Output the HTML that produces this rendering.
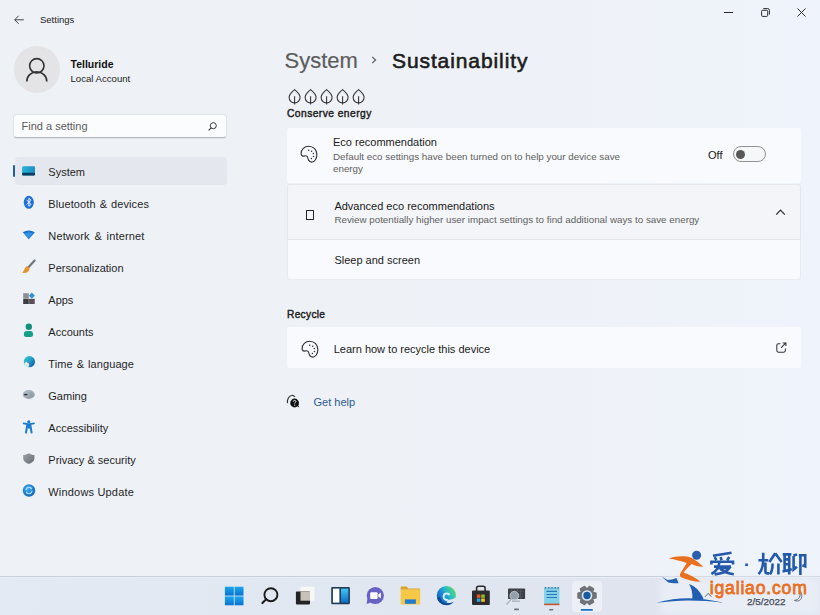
<!DOCTYPE html>
<html><head><meta charset="utf-8">
<style>
*{margin:0;padding:0;box-sizing:border-box}
html,body{width:820px;height:615px;overflow:hidden}
body{position:relative;background:linear-gradient(90deg,#eef2f7 0px,#eef1f6 290px,#eef2f8 550px,#eff3fb 820px);font-family:"Liberation Sans",sans-serif;color:#1b1b1b}
.a{position:absolute;white-space:nowrap;line-height:1}
svg.a{overflow:visible}
.nav{font-size:11px;color:#1f1f1f;transform:translateY(0.5px)}
.card{position:absolute;left:287px;width:514px;background:#f9fafd;border-radius:3px}
.sub{font-size:9.8px;color:#5f5f5f}
.t11{font-size:11px;color:#1a1a1a}
</style></head><body>

<!-- title bar -->
<svg class="a" style="left:14px;top:14.8px" width="10" height="10" viewBox="0 0 10 10"><path d="M4.6 0.8 0.7 4.8 4.6 8.8M0.8 4.8H9.8" fill="none" stroke="#3a3a3a" stroke-width="0.95"/></svg>
<div class="a" style="left:40px;top:14.9px;font-size:9.5px;color:#222">Settings</div>
<!-- window controls -->
<div class="a" style="left:723.5px;top:11.7px;width:9px;height:1px;background:#2a2a2a"></div>
<svg class="a" style="left:760.5px;top:8.3px" width="9" height="9" viewBox="0 0 9 9"><rect x="0.6" y="2.3" width="6.1" height="6.1" rx="1" fill="none" stroke="#2a2a2a" stroke-width="1"/><path d="M2.3 0.6H6.7A1.7 1.7 0 0 1 8.4 2.3V6.6" fill="none" stroke="#2a2a2a" stroke-width="1"/></svg>
<svg class="a" style="left:797px;top:8.2px" width="9" height="9" viewBox="0 0 9 9"><path d="M0.5 0.5 8.5 8.5M8.5 0.5 0.5 8.5" stroke="#2a2a2a" stroke-width="1"/></svg>

<!-- account -->
<div class="a" style="left:13.5px;top:46px;width:46.5px;height:46.5px;border-radius:50%;background:#e4e4e6"></div>
<svg class="a" style="left:25px;top:57px" width="24" height="26" viewBox="0 0 24 26"><circle cx="11.8" cy="8.8" r="7.2" fill="none" stroke="#333" stroke-width="1.6"/><path d="M1.8 24.5c0-5.6 4.4-9.6 10-9.6s10 4 10 9.6" fill="none" stroke="#333" stroke-width="1.6"/></svg>
<div class="a" style="left:70.5px;top:59px;font-size:10.5px;font-weight:bold;color:#111">Telluride</div>
<div class="a" style="left:70.5px;top:73.7px;font-size:9.6px;color:#222">Local Account</div>

<!-- search -->
<div class="a" style="left:13px;top:113.5px;width:214px;height:24px;background:#fbfcfe;border:1px solid #e0e3e8;border-bottom:1px solid #b4b9c0;border-radius:4px;box-shadow:0 0.5px 1px rgba(0,0,0,0.06)"></div>
<div class="a" style="left:21.5px;top:120.6px;font-size:11px;color:#5a5a5a">Find a setting</div>
<svg class="a" style="left:207.5px;top:121.5px" width="9" height="9" viewBox="0 0 9 9"><circle cx="5.3" cy="3.7" r="3" fill="none" stroke="#3a3a3a" stroke-width="1"/><path d="M3.2 5.8 0.6 8.4" stroke="#3a3a3a" stroke-width="1.1"/></svg>

<!-- nav selection -->
<div class="a" style="left:14.5px;top:157px;width:212.5px;height:28px;background:#e4e7ed;border-radius:4px"></div>
<div class="a" style="left:12.7px;top:164.5px;width:2.6px;height:12px;background:#1a5fa8;border-radius:2px"></div>

<!-- nav icons -->
<svg class="a" style="left:0;top:0" width="50" height="520">
 <defs>
  <linearGradient id="gsys" x1="0" y1="0" x2="1" y2="0"><stop offset="0" stop-color="#27b7d9"/><stop offset="1" stop-color="#1f8ac0"/></linearGradient>
  <radialGradient id="gupd" cx="0.4" cy="0.35" r="0.7"><stop offset="0" stop-color="#3fb0f2"/><stop offset="1" stop-color="#0d62b8"/></radialGradient>
  <linearGradient id="gglobe" x1="0" y1="0" x2="1" y2="0.6"><stop offset="0" stop-color="#36c7c4"/><stop offset="0.55" stop-color="#23a6d0"/><stop offset="1" stop-color="#1663ad"/></linearGradient>
  <linearGradient id="ggame" x1="0" y1="0" x2="1" y2="1"><stop offset="0" stop-color="#b3c0c9"/><stop offset="1" stop-color="#8c96a0"/></linearGradient>
  <linearGradient id="gshield" x1="0" y1="0" x2="1" y2="1"><stop offset="0" stop-color="#9ea3a8"/><stop offset="1" stop-color="#676c72"/></linearGradient>
 </defs>
 <!-- system -->
 <rect x="22" y="166.2" width="13" height="9.2" rx="1.3" fill="url(#gsys)"/>
 <rect x="22" y="172.8" width="13" height="2.6" rx="1" fill="#0b3d5e"/>
 <!-- bluetooth -->
 <ellipse cx="28.8" cy="202.3" rx="5" ry="6.5" fill="#1f6fd8"/>
 <path d="M26.6 199.8 31 204.4 28.9 206.3V198.2L31 200.2 26.6 204.7" fill="none" stroke="#fff" stroke-width="0.9"/>
 <!-- network -->
 <path d="M22.7 232.3Q28.8 228.8 34.9 232.3L28.8 239.3Z" fill="#1b73cf"/>
 <path d="M24.6 233.5Q28.8 231.5 33 233.5L28.8 238.2Z" fill="#2f93e6"/>
 <!-- personalization -->
 <path d="M34.6 260.5 28.5 267.3" stroke="#6d7883" stroke-width="2.2" stroke-linecap="round"/>
 <path d="M27.3 266.1C25.3 266.9 24.6 268.8 23.9 270.2 23.4 271.3 22.6 272 22.4 273 24.5 273.3 27.2 272.6 28.7 270.9 29.6 269.9 29.6 268.5 29.3 267.9Z" fill="#e69536"/>
 <!-- apps -->
 <rect x="23.2" y="293.2" width="5.6" height="5.3" fill="#8c8f93"/>
 <rect x="23.2" y="298.8" width="5.6" height="5.2" fill="#3b3e42"/>
 <rect x="29.1" y="298.8" width="5.6" height="5.2" fill="#5c4f59"/>
 <path d="M31.8 292.6 34.9 295.8 31.8 298.6 28.9 295.8Z" fill="#2a8fd8"/>
 <!-- accounts -->
 <circle cx="28.8" cy="326.7" r="3.2" fill="#13907c"/>
 <path d="M23.9 334C23.9 332.2 25 331.1 26.6 331.1H30.4C32 331.1 33 332.2 33 334V335C33 336.2 32 336.9 30.6 336.9H26.3C24.8 336.9 23.9 336.2 23.9 335Z" fill="#17a087"/>
 <!-- time & language -->
 <circle cx="29.4" cy="361.7" r="5.6" fill="url(#gglobe)"/>
 <path d="M24.2 363.4C24.6 365.6 26.3 367.1 28.3 367.3L29.6 363.6 26.6 361.4Z" fill="#d6eef2"/>
 <path d="M26.8 361.3 28.8 363.4 30.6 364" fill="none" stroke="#6a5670" stroke-width="0.9"/>
 <!-- gaming -->
 <ellipse cx="28.7" cy="394.5" rx="6.1" ry="4.4" fill="url(#ggame)"/>
 <path d="M24.1 394.6H27.4" stroke="#2a2f35" stroke-width="1.3"/>
 <path d="M31 392.5V397" stroke="#8a949d" stroke-width="0.8"/>
 <!-- accessibility -->
 <circle cx="28.8" cy="421.8" r="1.6" fill="#1c7bd1"/>
 <path d="M23.6 423.4 28.8 424.4 34 423.4" fill="none" stroke="#1c7bd1" stroke-width="1.7" stroke-linecap="round"/>
 <path d="M27.4 424.2 26 432.6M30.2 424.2 31.6 432.6" stroke="#1c7bd1" stroke-width="2" stroke-linecap="round"/>
 <rect x="27.3" y="424" width="3" height="4.5" fill="#1c7bd1"/>
 <!-- privacy -->
 <path d="M28.8 453.2C26.8 454.4 25 454.9 23.2 455V458.5C23.2 461.1 25.4 463 28.8 464 32.2 463 34.4 461.1 34.4 458.5V455C32.6 454.9 30.8 454.4 28.8 453.2Z" fill="url(#gshield)"/>
 <!-- windows update -->
 <circle cx="29" cy="490.5" r="6.2" fill="url(#gupd)"/>
 <path d="M25.9 490.2A3.1 3.1 0 0 1 31.6 488.7M32.1 490.8A3.1 3.1 0 0 1 26.4 492.3" fill="none" stroke="#b9e3ff" stroke-width="1.1"/>
 <path d="M31.9 487.2 31.9 489.3 29.9 489.1Z M26.1 493.8 26.1 491.7 28.1 491.9Z" fill="#b9e3ff"/>
</svg>

<div class="a nav" style="left:48.3px;top:166.3px">System</div>
<div class="a nav" style="left:48.3px;top:198.3px;word-spacing:0.8px;letter-spacing:0.1px">Bluetooth &amp; devices</div>
<div class="a nav" style="left:48.3px;top:230.3px;word-spacing:1.5px;letter-spacing:0.15px">Network &amp; internet</div>
<div class="a nav" style="left:48.3px;top:262.3px">Personalization</div>
<div class="a nav" style="left:48.3px;top:294.3px">Apps</div>
<div class="a nav" style="left:48.3px;top:326.3px">Accounts</div>
<div class="a nav" style="left:48.3px;top:358.3px;word-spacing:0.75px;letter-spacing:0.1px">Time &amp; language</div>
<div class="a nav" style="left:48.3px;top:390.3px">Gaming</div>
<div class="a nav" style="left:48.3px;top:422.3px">Accessibility</div>
<div class="a nav" style="left:48.3px;top:454.3px">Privacy &amp; security</div>
<div class="a nav" style="left:48.3px;top:486.3px;letter-spacing:0.18px">Windows Update</div>

<!-- header -->
<div class="a" style="left:284.5px;top:50.1px;font-size:22px;color:#5d5d5d;-webkit-text-stroke:0.2px #5d5d5d">System</div>
<svg class="a" style="left:371px;top:56px" width="6" height="8" viewBox="0 0 6 8"><path d="M1.2 0.8 4.6 4 1.2 7.2" fill="none" stroke="#555" stroke-width="1.1"/></svg>
<div class="a" style="left:392px;top:50.1px;font-size:21px;color:#1c1c1c;letter-spacing:0.9px;-webkit-text-stroke:0.6px #1c1c1c">Sustainability</div>

<!-- leaves -->
<svg class="a" style="left:0;top:0" width="400" height="120">
 <g fill="none" stroke="#2e2e2e" stroke-width="1.05">
  <g id="leaf"><path d="M294.6 89.5C293 91.1 289.1 93.6 289.1 97.3 289.1 100.5 291.6 103 294.6 103 297.6 103 300.1 100.5 300.1 97.3 300.1 93.6 296.2 91.1 294.6 89.5Z"/><path d="M294.6 96.2V104.5"/></g>
  <use href="#leaf" x="16"/><use href="#leaf" x="32"/><use href="#leaf" x="48"/><use href="#leaf" x="64"/>
 </g>
</svg>
<div class="a" style="left:287px;top:108.6px;font-size:10.3px;color:#1a1a1a;letter-spacing:0.42px;-webkit-text-stroke:0.4px #1a1a1a">Conserve energy</div>

<!-- card1 -->
<div class="card" style="top:127.5px;height:55px"></div>
<svg class="a" style="left:296px;top:140px" width="26" height="26" viewBox="0 0 26 26"><g fill="none" stroke="#2e2e2e" stroke-width="1.1"><path d="M12.7 6.3C17.4 6.3 20.9 9.9 20.9 14.6 20.9 19 18.3 22.1 15.6 22.1 13.6 22.1 12.4 20.6 11.9 18.2 11.6 16.5 10.9 15.7 9.6 15.8L7.3 16.1C5.9 16.2 5.1 15.1 5.1 13.6 5.1 9.5 8.5 6.3 12.7 6.3Z"/></g><g fill="#2e2e2e"><circle cx="12.7" cy="10.2" r="0.75"/><circle cx="15.6" cy="11.2" r="0.75"/><circle cx="17.3" cy="13.5" r="0.75"/><circle cx="17.5" cy="16.5" r="0.75"/><circle cx="15.4" cy="18.4" r="0.75"/></g></svg>
<div class="a t11" style="left:333px;top:136.6px">Eco recommendation</div>
<div class="a sub" style="left:333px;top:151.8px">Default eco settings have been turned on to help your device save</div>
<div class="a sub" style="left:333px;top:163.9px">energy</div>
<div class="a t11" style="left:708px;top:149.9px">Off</div>
<div class="a" style="left:733.4px;top:146.2px;width:32.3px;height:16.2px;border:1px solid #939393;border-radius:8.1px;background:#f6f7f9"></div>
<div class="a" style="left:735.9px;top:149.8px;width:9.6px;height:9.6px;border-radius:50%;background:#585858"></div>

<!-- card2 -->
<div class="card" style="top:184px;height:56px;background:#f3f5f9;border:1px solid #e4e7eb;border-bottom:none;border-radius:3px 3px 0 0"></div>
<div class="a" style="left:287px;top:239px;width:514px;height:1px;background:#e2e5e9"></div>
<div class="a" style="left:306px;top:209.6px;width:8.3px;height:10.4px;border:1.5px solid #222;border-radius:0.6px"></div>
<div class="a t11" style="left:334.4px;top:200.7px">Advanced eco recommendations</div>
<div class="a sub" style="left:334.4px;top:214.9px">Review potentially higher user impact settings to find additional ways to save energy</div>
<svg class="a" style="left:775px;top:208px" width="11" height="8" viewBox="0 0 11 8"><path d="M1.2 6.6 5.5 2.2 9.8 6.6" fill="none" stroke="#2a2a2a" stroke-width="1.2"/></svg>
<div class="card" style="top:240px;height:39.5px;border:1px solid #e8eaee;border-top:none;border-radius:0 0 3px 3px"></div>
<div class="a t11" style="left:334.4px;top:255.2px">Sleep and screen</div>

<!-- recycle -->
<div class="a" style="left:287px;top:309.7px;font-size:10.2px;color:#1a1a1a;letter-spacing:0.3px;-webkit-text-stroke:0.4px #1a1a1a">Recycle</div>
<div class="card" style="top:327px;height:41px"></div>
<svg class="a" style="left:296.5px;top:334.5px" width="26" height="26" viewBox="0 0 26 26"><g fill="none" stroke="#2e2e2e" stroke-width="1.1"><path d="M12.7 6.3C17.4 6.3 20.9 9.9 20.9 14.6 20.9 19 18.3 22.1 15.6 22.1 13.6 22.1 12.4 20.6 11.9 18.2 11.6 16.5 10.9 15.7 9.6 15.8L7.3 16.1C5.9 16.2 5.1 15.1 5.1 13.6 5.1 9.5 8.5 6.3 12.7 6.3Z"/></g><g fill="#2e2e2e"><circle cx="12.7" cy="10.2" r="0.75"/><circle cx="15.6" cy="11.2" r="0.75"/><circle cx="17.3" cy="13.5" r="0.75"/><circle cx="17.5" cy="16.5" r="0.75"/><circle cx="15.4" cy="18.4" r="0.75"/></g></svg>
<div class="a t11" style="left:333.7px;top:343.6px">Learn how to recycle this device</div>
<svg class="a" style="left:770px;top:336px" width="24" height="24" viewBox="0 0 24 24"><path d="M10.4 7.7H8.4C7.3 7.7 6.8 8.2 6.8 9.3V14.6C6.8 15.7 7.3 16.2 8.4 16.2H13.8C14.9 16.2 15.4 15.7 15.4 14.6V12.6" fill="none" stroke="#333" stroke-width="1.05"/><path d="M11 11.9 15.6 7.1M12.7 6.9H15.9V10.1" fill="none" stroke="#333" stroke-width="1.05"/></svg>

<!-- get help -->
<svg class="a" style="left:282px;top:390px" width="24" height="24" viewBox="0 0 24 24"><path d="M5.6 13.2C4.9 9.8 6.6 5.8 9.6 5.5 11 5.3 12.2 6 12.9 7" fill="none" stroke="#333" stroke-width="1.2"/><circle cx="12.6" cy="13" r="4.4" fill="#111"/><path d="M15 16 17.2 17.6 16.2 15Z" fill="#111"/><path d="M11.3 11.6C11.3 10.8 11.9 10.4 12.6 10.4 13.3 10.4 13.9 10.8 13.9 11.5 13.9 12.3 12.7 12.4 12.7 13.5" fill="none" stroke="#fff" stroke-width="0.9"/><circle cx="12.7" cy="15.1" r="0.6" fill="#fff"/></svg>
<div class="a" style="left:313.5px;top:397.2px;font-size:11px;color:#2b5a92">Get help</div>

<!-- taskbar -->
<div class="a" style="left:0;top:576px;width:820px;height:39px;background:linear-gradient(90deg,#e3eaf3 0px,#e1e7f1 400px,#dfe4ef 640px);border-top:1px solid #c9d0d9"></div>
<div class="a" style="left:0;top:577px;width:820px;height:1px;background:#e9eef5"></div>
<div class="a" style="left:660px;top:578px;width:160px;height:37px;background:#e9eef6;filter:blur(4px)"></div>
<div class="a" style="left:572.2px;top:581px;width:29.9px;height:30.5px;background:#eceff5;border-radius:4px"></div>
<svg class="a" style="left:0;top:570px" width="820" height="45" viewBox="0 570 820 45">
 <defs>
  <linearGradient id="gstart" x1="0" y1="0" x2="0" y2="1"><stop offset="0" stop-color="#1aa6ee"/><stop offset="1" stop-color="#0a73cf"/></linearGradient>
  <linearGradient id="gwid" x1="0" y1="0" x2="0" y2="1"><stop offset="0" stop-color="#41c6f3"/><stop offset="1" stop-color="#0c6cc4"/></linearGradient>
  <linearGradient id="gedge1" x1="0" y1="0.9" x2="1" y2="0.3"><stop offset="0" stop-color="#0d55a6"/><stop offset="0.4" stop-color="#1e86da"/><stop offset="0.68" stop-color="#2abfc4"/><stop offset="1" stop-color="#5ad86a"/></linearGradient>
 </defs>
 <!-- start -->
 <rect x="224.9" y="586.7" width="8.9" height="8.9" fill="url(#gstart)"/>
 <rect x="234.6" y="586.7" width="8.9" height="8.9" fill="url(#gstart)"/>
 <rect x="224.9" y="596.4" width="8.9" height="8.9" fill="url(#gstart)"/>
 <rect x="234.6" y="596.4" width="8.9" height="8.9" fill="url(#gstart)"/>
 <!-- search -->
 <circle cx="270.9" cy="594.7" r="6.5" fill="none" stroke="#1d1d1d" stroke-width="1.9"/>
 <path d="M266.2 599.3 262.4 603.1" stroke="#1d1d1d" stroke-width="2.1" stroke-linecap="round"/>
 <!-- task view -->
 <rect x="300.5" y="586.7" width="14" height="14" rx="1" fill="#f7f7f5"/>
 <rect x="295.9" y="591.6" width="14.1" height="12.8" rx="0.8" fill="#232323"/>
 <rect x="300.5" y="591.6" width="9.5" height="9.1" fill="#c7c1ba"/>
 <!-- widgets -->
 <rect x="331.2" y="586.9" width="18.7" height="17.4" rx="1.2" fill="#1f3b5c"/>
 <rect x="332.9" y="588.6" width="6.5" height="14" fill="#fbfdff"/>
 <rect x="341" y="588.6" width="7.3" height="14" fill="url(#gwid)"/>
 <!-- chat -->
 <circle cx="375.3" cy="595.5" r="8.6" fill="#6762c4"/>
 <path d="M367.5 598.5 366.6 604 371.5 602.3Z" fill="#6762c4"/>
 <rect x="370.2" y="592.3" width="7.4" height="6.6" rx="1" fill="#fff"/>
 <path d="M378.3 594.6 380.8 592.6V598.6L378.3 596.6Z" fill="#fff"/>
 <!-- explorer -->
 <path d="M400.6 587.5C400.6 586.9 401 586.6 401.5 586.6H406.5L408.5 588.5H419.3C419.8 588.5 420.2 588.9 420.2 589.4V589.8H400.6Z" fill="#d9a52c"/>
 <rect x="400.6" y="589.6" width="19.6" height="14.8" rx="0.8" fill="#f7c846"/>
 <rect x="404.9" y="599.4" width="11" height="4.4" fill="#1f7dd0"/>
 <!-- edge -->
 <circle cx="446.4" cy="595.5" r="9.6" fill="url(#gedge1)"/>
 <path d="M447.5 599.6Q452.5 600.2 456.6 597L457.5 607H446Z" fill="#e1e7f1"/>
 <path d="M437 597.5C437.8 602.2 441.8 605.2 446.6 605.2 449.8 605.2 452.4 603.8 454 601.4 452.2 602.6 450.2 603.1 448 603.1 443.8 603.1 440.8 600.6 440.2 597Z" fill="#0f4c98"/>
 <path d="M449.6 594.9C448.9 593.9 447.9 593.5 446.8 593.5 444.9 593.5 443.6 595 443.6 596.8 443.6 598.7 445.3 600 447.8 600" fill="none" stroke="#d6f0fa" stroke-width="1.9"/>
 <!-- store -->
 <path d="M476.6 591V588.2C476.6 587 477.3 586.3 478.5 586.3H483.2C484.4 586.3 485.1 587 485.1 588.2V591" fill="none" stroke="#2a2a2a" stroke-width="1.6"/>
 <rect x="472" y="590.6" width="17.8" height="14.4" rx="1" fill="#2c2c2e"/>
 <rect x="476.8" y="594.5" width="3.6" height="3.3" fill="#f0552a"/>
 <rect x="481.2" y="594.5" width="3.6" height="3.3" fill="#8ac11f"/>
 <rect x="476.8" y="598.5" width="3.6" height="3.3" fill="#22a5ee"/>
 <rect x="481.2" y="598.5" width="3.6" height="3.3" fill="#f8c01c"/>
 <!-- magnifier/keyboard -->
 <rect x="508" y="588.5" width="17.1" height="10.5" rx="0.8" fill="#3b3e42"/>
 <path d="M510 591.3H523.5M510 594H523.5M510 596.7H523.5M511.5 588.5V599M514.5 588.5V599M517.5 588.5V599M520.5 588.5V599" stroke="#5f6368" stroke-width="0.6"/>
 <circle cx="514.3" cy="595.8" r="4.4" fill="#9fb0bb" fill-opacity="0.85" stroke="#cfd6dc" stroke-width="0.8"/>
 <path d="M511.2 599.2 506.9 604.2" stroke="#a7adb3" stroke-width="1.2" stroke-linecap="round"/>
 <path d="M512 601.2H520" stroke="#8a9096" stroke-width="0.8"/>
 <rect x="514" y="608.6" width="5" height="1.6" rx="0.8" fill="#6d7278"/>
 <!-- notepad -->
 <rect x="544.1" y="587.2" width="15.3" height="17.6" rx="0.8" fill="#7fd2ea"/>
 <path d="M545.5 587.2V588.6M548.8 587.2V588.6M552 587.2V588.6M555.3 587.2V588.6M558.3 587.2V588.6" stroke="#2f4a6a" stroke-width="1.3"/>
 <path d="M546.6 591.4H557M546.6 594.5H557M546.6 597.5H557" stroke="#2c77b3" stroke-width="1.2"/>
 <rect x="544.1" y="603.6" width="15.3" height="1.6" fill="#c8552c"/>
 <rect x="549" y="608.9" width="4.4" height="1.6" rx="0.8" fill="#6d7278"/>
 <!-- settings gear -->
 <g transform="translate(587 595.5)">
  <path d="M6.29 -3.07 L9.08 -2.43 L9.08 2.43 L6.29 3.07 L5.80 3.91 L6.65 6.65 L2.43 9.08 L0.49 6.98 L-0.49 6.98 L-2.43 9.08 L-6.65 6.65 L-5.80 3.91 L-6.29 3.07 L-9.08 2.43 L-9.08 -2.43 L-6.29 -3.07 L-5.80 -3.91 L-6.65 -6.65 L-2.43 -9.08 L-0.49 -6.98 L0.49 -6.98 L2.43 -9.08 L6.65 -6.65 L5.80 -3.91Z" fill="#6f7378" stroke="#6f7378" stroke-width="1.3" stroke-linejoin="round"/>
  <circle cx="0" cy="0" r="5.3" fill="#dbe9f7"/>
  <circle cx="0" cy="0" r="3.7" fill="#1a5aa3"/>
 </g>
 <rect x="580.7" y="608.9" width="12.2" height="1.9" rx="0.9" fill="#1a6fc4"/>
</svg>

<!-- watermark -->
<svg class="a" style="left:640px;top:540px" width="180" height="75" viewBox="640 540 180 75">
 <text x="747" y="605.4" font-family="Liberation Sans" font-size="9.2" fill="#454b58" stroke="#454b58" stroke-width="0.25" textLength="38.4" lengthAdjust="spacingAndGlyphs">2/5/2022</text>
 <path d="M800.3 590.8C801.8 593 802.4 596.2 801.2 598.6 799.8 601.2 796.6 601.6 794.3 600.3 796.6 600.3 798.5 599.2 799.4 597.2 800.4 595.2 800.6 593 800.3 590.8Z" fill="none" stroke="#5b6475" stroke-width="0.9"/>
 <!-- blue swoosh -->
 <path d="M656.3 602.8C668 599.5 678 598.2 688 598.2 700 598.2 712 600 724 602.8 712 601.2 700 600.4 688 600.4 678 600.4 668 601.3 656.3 602.8Z" fill="#2160b2"/>
 <!-- left wing -->
 <path d="M661.5 576.6 668 582.2C671 583.3 675 583.5 678.6 583.2 677.8 581 677 579.5 676.5 578 673.5 579.2 670.5 580 667.5 580Z" fill="#245fb0"/>
 <!-- fin -->
 <path d="M689 584C695 586 700 591 703 597.5L703.5 599H692.3C692.8 594 691.8 588.5 689 584Z" fill="#225db0"/>
 <path d="M705 596.8 708.2 593.3 711.3 596.8" fill="none" stroke="#3a4a60" stroke-width="0.8"/>
 <!-- head -->
 <circle cx="696.6" cy="555.2" r="4.5" fill="#2a5fb3"/>
 <!-- orange body -->
 <path d="M668.8 558.4C674 556.4 681 555.6 687 556.6 693 557.6 698 562 703 566.6 699 566.8 695 565.8 691.5 564 689 566.5 686 569.5 683.5 572.5 688.5 574 694.5 577 700.8 581.8 694 581.8 687 580 681 577.3 679.4 576.4 679.6 574.6 680.8 572.6 682.5 569.8 684.5 567 686.6 563 681 560.8 675 559.5 668.8 558.4Z" fill="#e9701f"/>
 <!-- chinese characters (approximate) -->
 <g fill="none" stroke="#2358aa" stroke-width="2.6" stroke-linecap="butt">
  <path d="M731.5 552.8 713 555.8M714.6 557.2 716.4 560.2M720.6 557 721.6 560.2M729.2 557 727.2 560.2M711.4 564.6V561.8H733V564.6M714 566.6H731M719.4 562.4C718.6 568 716 571.5 711.4 574M717.6 568.2H729.2C726.6 572 721.6 573.6 714.6 574.4M720.6 569.2C724.4 572.2 728.6 573.6 733.8 574.2"/>
  <path d="M745.2 564.8H747.9"/>
  <path d="M758.4 560.2H768.2M763.2 552.8V560.2C763.2 566 761.8 570.6 758.6 574.2M765.4 562.4V571.4C765.4 572.8 766.2 573.4 767.6 573.4H769.2M775.2 553.2 769.4 562M775.2 553.2 781.6 562M772.6 563.4C772.6 569 771.6 572 770 574.4M778.4 563.4V574.4"/>
  <path d="M782.8 554.4H791.4M784.6 554.4V571.6M789.2 554.4V574.4M784.6 559.4H789.2M784.6 564.2H789.2M782.6 571.6 791.8 569.2M793.4 555.6 797 554.4M793.6 556V569.6L797 566.8M798.8 555.2H805.2V566.4L802.4 565.2M800.4 555.2V575"/>
 </g>
 <!-- igaliao.com -->
 <text x="709.8" y="593.8" font-family="Liberation Sans" font-size="17.6" fill="#e9701f" stroke="#e9701f" stroke-width="0.8" textLength="97" lengthAdjust="spacing">igaliao.com</text>
</svg>

</body></html>
